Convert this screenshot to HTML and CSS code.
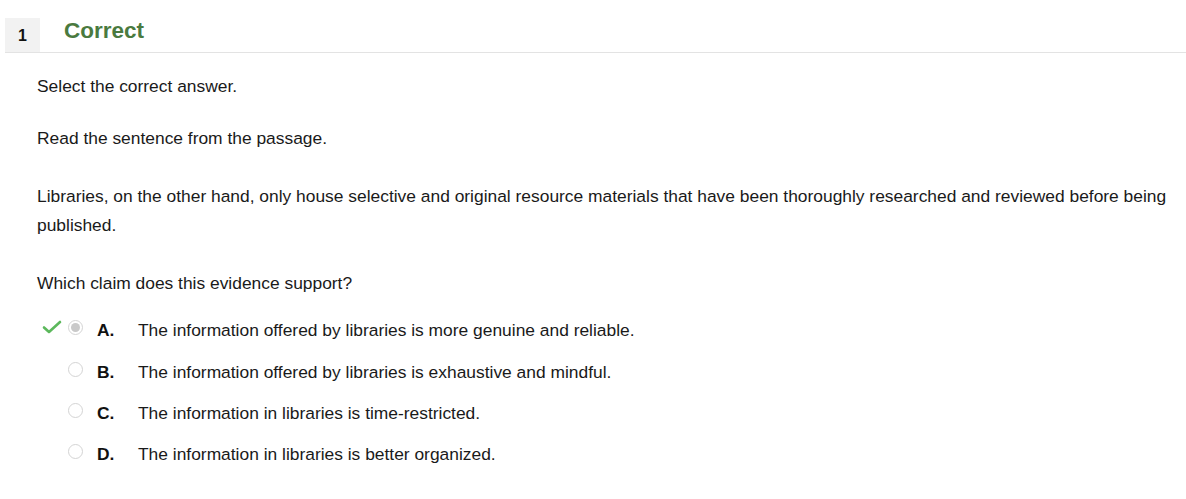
FILE: index.html
```html
<!DOCTYPE html>
<html>
<head>
<meta charset="utf-8">
<link rel="stylesheet" href="styles.css">
</head>
<body>
<div class="header">
  <div class="num">1</div>
  <div class="status">Correct</div>
</div>
<div class="content">
  <p class="p first">Select the correct answer.</p>
  <p class="p gap">Read the sentence from the passage.</p>
  <p class="p gap">Libraries, on the other hand, only house selective and original resource materials that have been thoroughly researched and reviewed before being published.</p>
  <p class="p last">Which claim does this evidence support?</p>
  <div class="options">
    <div class="opt">
      <span class="mark"><svg width="20" height="14" viewBox="0 0 20 14"><path d="M2 7.5 L7 12 L18 2" fill="none" stroke="#5cb85c" stroke-width="2.6" stroke-linecap="round" stroke-linejoin="round"/></svg></span>
      <span class="radio checked"></span>
      <span class="letter">A.</span>
      <span class="text">The information offered by libraries is more genuine and reliable.</span>
    </div>
    <div class="opt">
      <span class="mark"></span>
      <span class="radio"></span>
      <span class="letter">B.</span>
      <span class="text">The information offered by libraries is exhaustive and mindful.</span>
    </div>
    <div class="opt">
      <span class="mark"></span>
      <span class="radio"></span>
      <span class="letter">C.</span>
      <span class="text">The information in libraries is time-restricted.</span>
    </div>
    <div class="opt">
      <span class="mark"></span>
      <span class="radio"></span>
      <span class="letter">D.</span>
      <span class="text">The information in libraries is better organized.</span>
    </div>
  </div>
</div>
</body>
</html>
```
FILE: styles.css
```css
body {
  margin: 0;
  background: #fff;
  font-family: "Liberation Sans", Arial, sans-serif;
  color: #1a1a1a;
}
.header {
  display: flex;
  align-items: center;
  margin-top: 18px;
  margin-left: 5px;
  border-bottom: 1px solid #e3e3e3;
}
.num {
  width: 35px;
  height: 34px;
  background: #f2f2f2;
  display: flex;
  align-items: center;
  justify-content: center;
  font-weight: bold;
  font-size: 16px;
  color: #111;
  padding-top: 2px;
  box-sizing: border-box;
}
.status {
  margin-left: 24px;
  font-size: 22.5px;
  font-weight: bold;
  color: #4a7a3f;
  padding-bottom: 8px;
}
.content {
  padding: 0 8px 0 37px;
}
.p {
  margin: 0 0 23px 0;
  font-size: 17.4px;
  line-height: 29px;
}
.p.first {
  margin-top: 19px;
}
.p.gap {
  margin-bottom: 29px;
}
.p.last {
  margin-bottom: 12px;
}
.options {
  margin: 0;
}
.opt {
  display: flex;
  align-items: center;
  height: 41.4px;
  font-size: 17.4px;
}
.mark {
  width: 20px;
  height: 14px;
  margin-left: 5px;
  margin-top: -7px;
  display: flex;
}
.radio {
  width: 15px;
  height: 15px;
  border: 1px solid #d4d4d4;
  border-radius: 50%;
  margin-left: 6px;
  margin-top: -6px;
  box-sizing: border-box;
  background: #fff;
  position: relative;
}
.radio.checked::after {
  content: "";
  position: absolute;
  left: 2px;
  top: 2px;
  width: 9px;
  height: 9px;
  border-radius: 50%;
  background: #c9c9c9;
}
.letter {
  font-weight: bold;
  margin-left: 14px;
  width: 41px;
  color: #111;
}
.text {
  color: #1a1a1a;
}
```
